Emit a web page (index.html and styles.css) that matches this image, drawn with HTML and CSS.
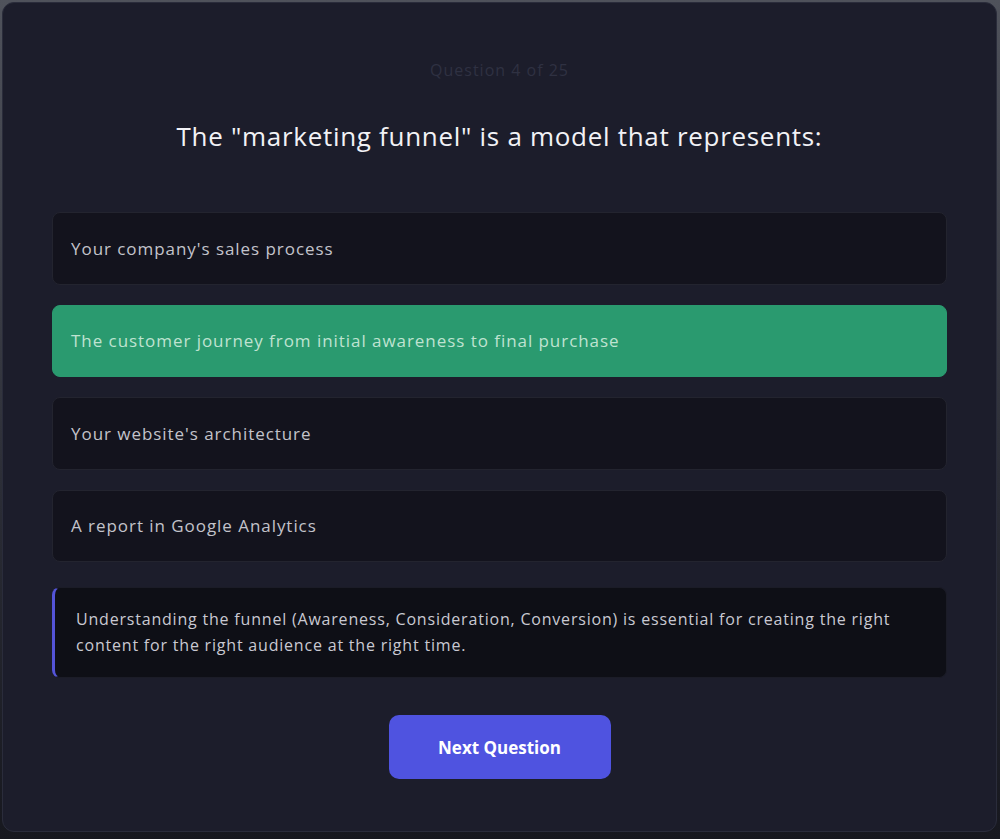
FILE: index.html
```html
<!DOCTYPE html>
<html lang="en">
<head>
  <meta charset="UTF-8">
  <meta name="viewport" content="width=device-width, initial-scale=1.0">
  <title>Quiz</title>
  <link rel="stylesheet" href="styles.css">
</head>
<body>
  <div class="quiz-card">
    <div class="counter">Question 4 of 25</div>
    <h1 class="question">The "marketing funnel" is a model that represents:</h1>

    <div class="options">
      <div class="option">Your company's sales process</div>
      <div class="option correct">The customer journey from initial awareness to final purchase</div>
      <div class="option">Your website's architecture</div>
      <div class="option">A report in Google Analytics</div>
    </div>

    <div class="explanation">
      Understanding the funnel (Awareness, Consideration, Conversion) is essential for creating the right content for the right audience at the right time.
    </div>

    <div class="actions">
      <button class="next-btn">Next Question</button>
    </div>
  </div>
</body>
</html>
```

FILE: styles.css
```css
* {
  margin: 0;
  padding: 0;
  box-sizing: border-box;
  font-family: "Open Sans", "DejaVu Sans", sans-serif;
}

body {
  background: linear-gradient(180deg, #4f525b 0%, #2a2c35 60%, #17181f 100%);
  height: 839px;
  padding: 2px 3px 7px 2px;
}

.quiz-card {
  height: 100%;
  background-color: #1c1d2b;
  border: 1px solid #2a2c3b;
  border-radius: 12px;
  padding: 55px 49px 50px;
}

.counter {
  text-align: center;
  color: #2f3142;
  font-size: 16px;
  line-height: 24px;
  letter-spacing: 1px;
}

.question {
  text-align: center;
  color: #f2f2f6;
  font-size: 26px;
  font-weight: 400;
  line-height: 36px;
  letter-spacing: 0.7px;
  margin-top: 36px;
}

.options {
  margin-top: 58px;
  display: flex;
  flex-direction: column;
  gap: 20px;
}

.option {
  height: 72.5px;
  display: flex;
  align-items: center;
  padding: 0 18px;
  background-color: #13131d;
  border: 1px solid #23242f;
  border-radius: 8px;
  color: #c3c3cb;
  font-size: 17px;
  letter-spacing: 0.95px;
}

.option.correct {
  background-color: #2a9a6f;
  border-color: #2a9a6f;
  color: #bfe3d1;
}

.explanation {
  margin-top: 25px;
  background-color: #0e0f16;
  border: 1px solid #1b1c27;
  border-left: 3px solid #5454d8;
  border-radius: 8px;
  padding: 18px 21px 19px;
  color: #c9c9d2;
  font-size: 16px;
  line-height: 26px;
  letter-spacing: 0.8px;
}

.actions {
  margin-top: 37px;
  display: flex;
  justify-content: center;
}

.next-btn {
  width: 222px;
  height: 64px;
  border: none;
  border-radius: 10px;
  background-color: #4f53e0;
  color: #ffffff;
  font-size: 17px;
  font-weight: 700;
  cursor: pointer;
}
```
